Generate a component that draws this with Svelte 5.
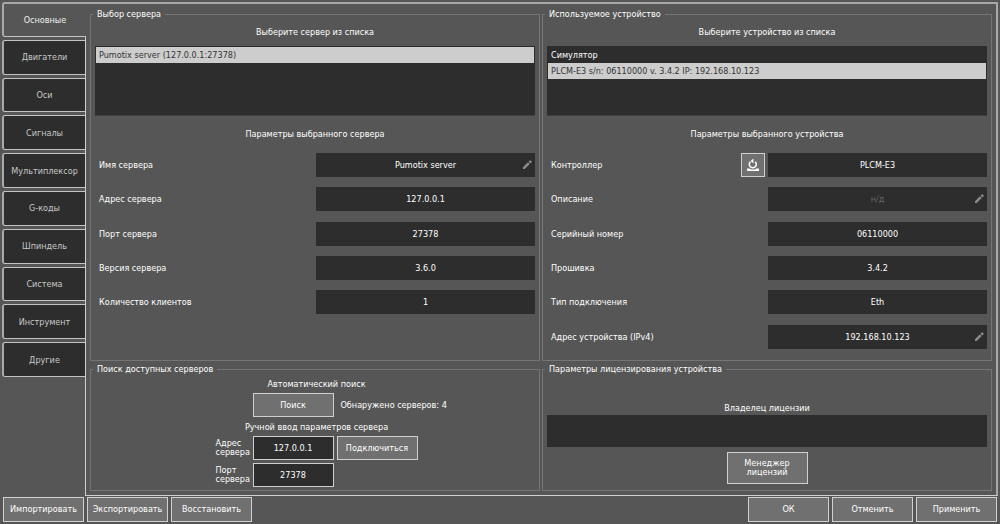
<script>
let tabs = ['Основные', 'Двигатели', 'Оси', 'Сигналы', 'Мультиплексор', 'G-коды', 'Шпиндель', 'Система', 'Инструмент', 'Другие'];
let activeTab = $state(0);

let servers = ['Pumotix server (127.0.0.1:27378)'];
let devices = ['Симулятор', 'PLCM-E3 s/n: 06110000 v. 3.4.2 IP: 192.168.10.123'];
let server = $state(0);
let device = $state(1);

let serverParams = [
    { id: 'srv-name', label: 'Имя сервера', value: 'Pumotix server', edit: true },
    { id: 'srv-addr', label: 'Адрес сервера', value: '127.0.0.1' },
    { id: 'srv-port', label: 'Порт сервера', value: '27378' },
    { id: 'srv-version', label: 'Версия сервера', value: '3.6.0' },
    { id: 'srv-clients', label: 'Количество клиентов', value: '1' }
];
let deviceParams = [
    { id: 'dev-controller', label: 'Контроллер', value: 'PLCM-E3', reset: true },
    { id: 'dev-note', label: 'Описание', value: '', edit: true },
    { id: 'dev-serial', label: 'Серийный номер', value: '06110000' },
    { id: 'dev-firmware', label: 'Прошивка', value: '3.4.2' },
    { id: 'dev-link', label: 'Тип подключения', value: 'Eth' },
    { id: 'dev-ip', label: 'Адрес устройства (IPv4)', value: '192.168.10.123', edit: true }
];
</script>

{#snippet params(rows)}
<div class="params">
    {#each rows as row}
    <div class="param">
        <label for={row.id}>{row.label}</label>
        {#if row.reset}
        <button class="btn reset" aria-label="Перезагрузить">
            <svg width="14" height="14" viewBox="0 0 14 14">
                <path d="M4.4 3.8A3.5 3.5 0 1 0 9.2 3.8" fill="none" stroke="#fff" stroke-width="1.5" />
                <path d="M7.4 0.6v5L4.6 3z" fill="#fff" />
                <path d="M1 10.4h2.6q1.2 1.2 3.4 1.2t3.4-1.2H13V13H1z" fill="#fff" />
            </svg>
        </button>
        {/if}
        <div class="field">
            <input id={row.id} type="text" value={row.value} placeholder="н/д" readonly={!row.edit} />
            {#if row.edit}
            <svg class="pencil" width="10" height="10" viewBox="0 0 10 10">
                <path d="M1 9V7.2l4.9-4.9 1.8 1.8L2.8 9zM6.5 1.7L7.7.5Q8.2.1 8.7.5l.8.8q.4.5 0 1L8.3 3.5z" fill="#8c8c8c" />
            </svg>
            {/if}
        </div>
    </div>
    {/each}
</div>
{/snippet}

<div class="page">
    <div class="body">
        <div class="tabs" role="tablist">
            {#each tabs as tab, i}
            <button class={i === activeTab ? 'tab active' : 'tab'} role="tab" aria-selected={i === activeTab} onclick={() => activeTab = i}>{tab}</button>
            {/each}
        </div>

        <main class="panel">
            <fieldset>
                <legend>Выбор сервера</legend>
                <div class="title">Выберите сервер из списка</div>
                <div class="list" role="listbox" aria-label="Серверы">
                    {#each servers as item, i}
                    <button class={i === server ? 'item selected' : 'item'} role="option" aria-selected={i === server} onclick={() => server = i}>{item}</button>
                    {/each}
                </div>
                <div class="title second">Параметры выбранного сервера</div>
                {@render params(serverParams)}
            </fieldset>

            <fieldset>
                <legend>Используемое устройство</legend>
                <div class="title">Выберите устройство из списка</div>
                <div class="list" role="listbox" aria-label="Устройства">
                    {#each devices as item, i}
                    <button class={i === device ? 'item selected' : 'item'} role="option" aria-selected={i === device} onclick={() => device = i}>{item}</button>
                    {/each}
                </div>
                <div class="title second">Параметры выбранного устройства</div>
                {@render params(deviceParams)}
            </fieldset>

            <fieldset>
                <legend>Поиск доступных серверов</legend>
                <div class="search">
                    <div class="caption">Автоматический поиск</div>
                    <button class="btn find">Поиск</button>
                    <div class="found">Обнаружено серверов: 4</div>
                    <div class="caption">Ручной ввод параметров сервера</div>
                    <label for="addr">Адрес<br />сервера</label>
                    <input id="addr" type="text" value="127.0.0.1" />
                    <button class="btn">Подключиться</button>
                    <label for="port">Порт<br />сервера</label>
                    <input id="port" type="text" value="27378" />
                </div>
            </fieldset>

            <fieldset>
                <legend>Параметры лицензирования устройства</legend>
                <div class="license">
                    <label for="owner">Владелец лицензии</label>
                    <input id="owner" type="text" readonly />
                    <button class="btn manager">Менеджер<br />лицензий</button>
                </div>
            </fieldset>
        </main>
    </div>

    <footer>
        <button class="btn">Импортировать</button>
        <button class="btn">Экспортировать</button>
        <button class="btn">Восстановить</button>
        <span class="space"></span>
        <button class="btn">ОК</button>
        <button class="btn">Отменить</button>
        <button class="btn">Применить</button>
    </footer>
</div>

<style>
:global(body) {
    background: #565656;
}
.page {
    box-sizing: border-box;
    min-height: 100vh;
    display: flex;
    flex-direction: column;
    gap: 1px;
    padding: 2px;
    color: #fff;
    font: 9px/12px "DejaVu Sans Condensed", "Noto Sans", sans-serif;
}
button, input {
    box-sizing: border-box;
    margin: 0;
    font: inherit;
    color: inherit;
}
button {
    cursor: pointer;
    padding: 0;
}
.body {
    flex: 1;
    display: flex;
}
.tabs {
    width: 84px;
    height: 375px;
    margin-right: -1px;
    display: grid;
    grid-template-rows: repeat(10, 1fr);
    gap: 3px;
}
.tab {
    border: 1px solid #c4c4c4;
    border-left: 2px solid #a8a8a8;
    border-right-color: #d0d0d0;
    border-radius: 3px 0 0 3px;
    background: #2d2d2d;
    color: #c8c8c8;
}
.tab.active {
    position: relative;
    border-top: 2px solid #a8a8a8;
    border-right: none;
    background: #565656;
    color: #f0f0f0;
}
.panel {
    flex: 1;
    display: grid;
    grid-template-columns: 1fr 1fr;
    grid-template-rows: 1fr auto;
    gap: 2px;
    padding: 4px;
    border: 1px solid #d0d0d0;
    border-top: 2px solid #a8a8a8;
    border-right: 2px solid #a8a8a8;
}
fieldset {
    min-width: 0;
    margin: 0;
    padding: 0 4px 6px;
    border: 1px solid #757575;
    display: flex;
    flex-direction: column;
}
legend {
    margin-left: -2px;
    padding: 0 4px;
}
.title {
    line-height: 24px;
    margin-bottom: 2px;
    text-align: center;
}
.second {
    margin-top: 6px;
}
.list {
    box-sizing: border-box;
    height: 70px;
    padding: 1px;
    background: #2d2d2d;
    border-bottom: 1px solid #404040;
    display: flex;
    flex-direction: column;
}
.item {
    height: 16px;
    padding: 0 3px;
    border: none;
    background: none;
    text-align: left;
}
.selected {
    background: #cdcdcd;
    color: #333;
}
.params {
    flex: 1;
    display: grid;
    grid-template-rows: repeat(6, 1fr);
    align-items: center;
}
.param {
    display: flex;
    align-items: center;
    gap: 3px;
}
.param label {
    flex: 1;
    padding-left: 4px;
}
.field {
    width: calc(50% - 1px);
    position: relative;
}
.field input {
    display: block;
    width: 100%;
    height: 24px;
    padding: 0;
    border: none;
    background: #2d2d2d;
    text-align: center;
}
.field input::placeholder {
    color: #666;
}
.pencil {
    position: absolute;
    right: 3px;
    top: 7px;
}
.btn {
    width: 81px;
    height: 25px;
    border: 1px solid #d0d0d0;
    background: #707070;
    line-height: 9px;
    white-space: nowrap;
}
.reset {
    width: 24px;
    height: 24px;
    display: grid;
    place-items: center;
}
.search {
    display: grid;
    grid-template-columns: 34px 81px 81px;
    grid-template-rows: 13px 24px 13px 24px 24px;
    gap: 3px;
    align-items: center;
    justify-content: center;
    margin: 2px 0 -3px;
    padding-left: 3px;
    white-space: nowrap;
}
.search .btn, .search input {
    height: 24px;
}
.search input {
    min-width: 0;
    padding: 0;
    border: 1px solid #d0d0d0;
    background: #2d2d2d;
    text-align: center;
}
.search label {
    line-height: 9px;
}
.caption {
    grid-column: 1 / -1;
    text-align: center;
}
.find {
    grid-column: 2;
}
.found {
    padding-left: 4px;
}
.license {
    flex: 1;
    display: flex;
    flex-direction: column;
    justify-content: flex-end;
    align-items: center;
}
.license input {
    width: 100%;
    height: 32px;
    margin: 1px 0 5px;
    border: none;
    background: #2d2d2d;
}
.manager {
    height: 32px;
}
footer {
    display: flex;
    gap: 3px;
    padding: 0 1px;
}
.space {
    flex: 1;
}
</style>
